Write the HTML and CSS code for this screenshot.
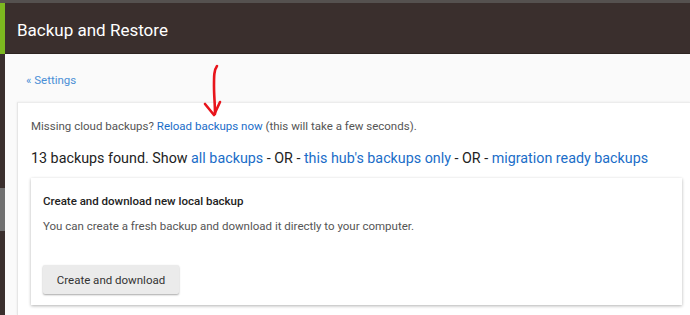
FILE: index.html
```html
<!DOCTYPE html>
<html>
<head>
<meta charset="utf-8">
<link rel="stylesheet" href="styles.css">
</head>
<body>
<div class="topline"></div>
<div class="shell">
  <aside class="rail">
    <div class="rail-accent"></div>
    <div class="rail-dark"></div>
    <div class="rail-gray"></div>
    <div class="rail-dark rail-fill"></div>
  </aside>
  <div class="main">
    <header class="header"><h1 class="title">Backup and Restore</h1></header>
    <div class="content">
      <a class="back" href="#">« Settings</a>
      <section class="card">
        <p class="hint">Missing cloud backups? <a class="link-strong" href="#">Reload backups now</a> (this will take a few seconds).</p>
        <p class="found">13 backups found. Show <a class="link" href="#">all backups</a> - OR - <a class="link" href="#">this hub's backups only</a> - OR - <a class="link" href="#">migration ready backups</a></p>
        <div class="inner">
          <h2 class="inner-title">Create and download new local backup</h2>
          <p class="inner-text">You can create a fresh backup and download it directly to your computer.</p>
          <button class="btn">Create and download</button>
        </div>
      </section>
    </div>
  </div>
</div>
<svg class="arrow" width="30" height="58" viewBox="0 0 30 58">
  <path d="M17 4 C14 8 14 14 14 24 C14 34 15 42 15 52" fill="none" stroke="#e8141b" stroke-width="2.6" stroke-linecap="round"/>
  <path d="M5 42 L14 53 L20 40" fill="none" stroke="#e8141b" stroke-width="2.6" stroke-linecap="round" stroke-linejoin="round"/>
</svg>
</body>
</html>
```

FILE: styles.css
```css
* { box-sizing: border-box; }
html, body { margin: 0; padding: 0; }
body {
  width: 690px;
  height: 315px;
  overflow: hidden;
  background: #fafafa;
  font-family: Roboto, "Liberation Sans", sans-serif;
  position: relative;
}
.topline { height: 3px; background: #55514f; }
.shell { display: flex; height: 312px; }
.rail { width: 5px; display: flex; flex-direction: column; flex-shrink: 0; }
.rail-accent { height: 51px; background: #7cb81f; flex-shrink: 0; }
.rail-dark { height: 134px; background: #3a2f2d; flex-shrink: 0; }
.rail-gray { height: 43px; background: #707070; flex-shrink: 0; }
.rail-fill { flex: 1; }
.main { flex: 1; display: flex; flex-direction: column; min-width: 0; }
.header {
  height: 51px;
  flex-shrink: 0;
  background: #3a2f2d;
  display: flex;
  align-items: center;
  padding: 3px 0 0 12px;
  border-bottom: 1px solid #2d2422;
}
.title { margin: 0; color: #fff; font-size: 17px; font-weight: 400; }
.content {
  flex: 1;
  min-height: 0;
  padding: 18px 0 0 12px;
  display: flex;
  flex-direction: column;
}
.back { display: block; color: #4a8fd6; font-size: 11.5px; text-decoration: none; margin-left: 9px; line-height: 16px; align-self: flex-start; }
.card {
  flex: 1;
  min-height: 0;
  overflow: hidden;
  margin-top: 14px;
  background: #fff;
  border-left: 1px solid #e6e6e6;
  border-top: 1px solid #ececec;
  box-shadow: 0 0 2px rgba(0,0,0,0.08);
  padding: 15px 0 0 13px;
}
.hint { margin: 0; font-size: 11.5px; color: #555; line-height: 16px; }
.link-strong { color: #1a6dc8; text-decoration: none; }
.found { margin: 14px 0 0; font-size: 14.3px; color: #222; line-height: 20px; }
.link { color: #1a6dc8; text-decoration: none; }
.inner {
  margin-top: 10px;
  width: 651px;
  height: 127px;
  background: #fff;
  box-shadow: 0 1px 3px rgba(0,0,0,0.3);
  padding: 15px 12px 0 12px;
  display: flex;
  flex-direction: column;
  align-items: flex-start;
}
.inner-title { margin: 0; font-size: 11.5px; font-weight: 500; color: #222; line-height: 16px; }
.inner-text { margin: 9px 0 0; font-size: 11.5px; color: #555; line-height: 16px; }
.btn {
  margin-top: 31px;
  width: 136px;
  height: 29px;
  background: #ebebeb;
  border: none;
  border-radius: 2px;
  box-shadow: 0 1px 2px rgba(0,0,0,0.35);
  font-family: Roboto, "Liberation Sans", sans-serif;
  font-size: 11.5px;
  color: #333;
}
.arrow { position: absolute; left: 200px; top: 62px; }
```
